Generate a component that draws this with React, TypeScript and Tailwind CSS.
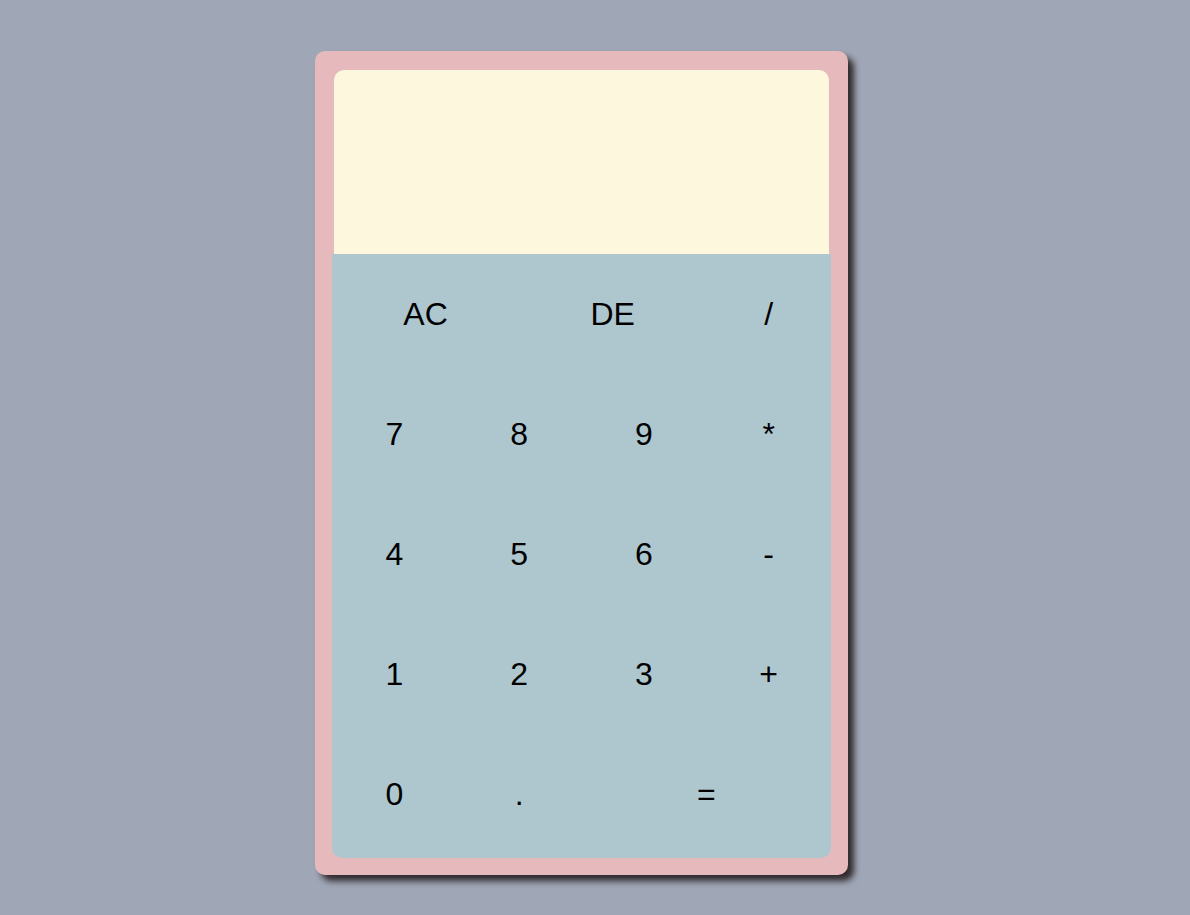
import React from "react";

const rows: { label: string; span: string }[][] = [
  [
    { label: "AC", span: "col-span-3" },
    { label: "DE", span: "col-span-3" },
    { label: "/", span: "col-span-2" },
  ],
  [
    { label: "7", span: "col-span-2" },
    { label: "8", span: "col-span-2" },
    { label: "9", span: "col-span-2" },
    { label: "*", span: "col-span-2" },
  ],
  [
    { label: "4", span: "col-span-2" },
    { label: "5", span: "col-span-2" },
    { label: "6", span: "col-span-2" },
    { label: "-", span: "col-span-2" },
  ],
  [
    { label: "1", span: "col-span-2" },
    { label: "2", span: "col-span-2" },
    { label: "3", span: "col-span-2" },
    { label: "+", span: "col-span-2" },
  ],
  [
    { label: "0", span: "col-span-2" },
    { label: ".", span: "col-span-2" },
    { label: "=", span: "col-span-4" },
  ],
];

export default function App() {
  return (
    <div className="min-h-screen bg-[#9fa6b5] pt-[51px] pl-[315px] font-['Liberation_Sans',Arial,sans-serif]">
      <div className="w-[533px] h-[824px] bg-[#e6babd] rounded-[10px] p-[17px] shadow-[6px_6px_6px_rgba(20,10,10,0.8)] flex flex-col">
        {/* display */}
        <div className="mx-[2px] mt-[2px] h-[184px] bg-[#fdf7dd] rounded-t-[10px]" />

        {/* keypad */}
        <div className="flex-1 bg-[#aec7cf] rounded-b-[10px] grid grid-cols-8 auto-rows-[120px]">
          {rows.flat().map((k, i) => (
            <button
              key={i}
              className={`${k.span} flex items-center justify-center text-[32px] text-black bg-transparent`}
            >
              {k.label}
            </button>
          ))}
        </div>
      </div>
    </div>
  );
}
